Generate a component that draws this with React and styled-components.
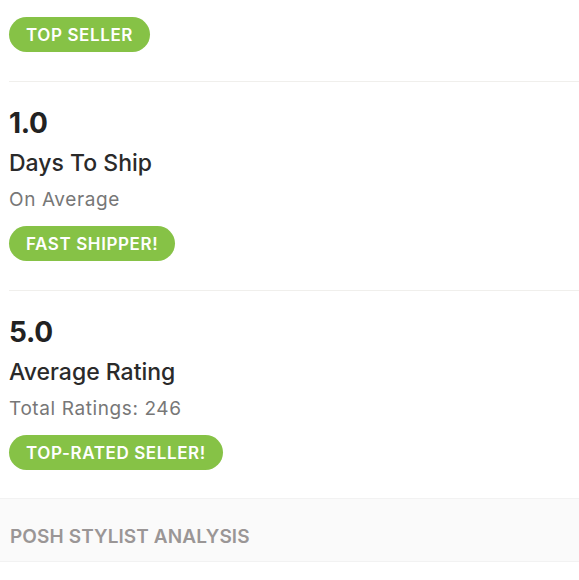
import styled, { createGlobalStyle } from 'styled-components';

const GlobalStyle = createGlobalStyle`
  body {
    margin: 0;
    background: #fff;
    font-family: Inter, Lato, Arial, sans-serif;
    color: #222;
  }
`;

const stats = [
  { value: '1.0', label: 'Days To Ship', sub: 'On Average', badge: 'FAST SHIPPER!' },
  { value: '5.0', label: 'Average Rating', sub: 'Total Ratings: 246', badge: 'TOP-RATED SELLER!' },
];

const App = () => (
  <>
    <GlobalStyle />
    <Page>
      <Section>
        <Badge>TOP SELLER</Badge>
      </Section>
      {stats.map((s, i) => (
        <Section key={s.label} $stat $last={i === stats.length - 1}>
          <Value>{s.value}</Value>
          <Label>{s.label}</Label>
          <Sub>{s.sub}</Sub>
          <Badge>{s.badge}</Badge>
        </Section>
      ))}
      <Header>POSH STYLIST ANALYSIS</Header>
    </Page>
  </>
);

const Page = styled.div`
  display: flex;
  flex-direction: column;
  width: 579px;
`;

const Section = styled.div`
  display: flex;
  flex-direction: column;
  align-items: flex-start;
  margin-left: 9px;
  padding: ${(p) => (p.$stat ? '23px' : '17px')} 0 ${(p) => (p.$last ? '28px' : '29px')};
  border-bottom: ${(p) => (p.$last ? 'none' : '1px solid #f0efec')};
`;

const Value = styled.div`
  font-size: 28px;
  font-weight: 700;
  line-height: 36px;
  color: #222;
  letter-spacing: -0.3px;
`;

const Label = styled.div`
  margin-top: 7px;
  font-size: 23px;
  font-weight: 500;
  line-height: 30px;
  color: #2a2a2a;
`;

const Sub = styled.div`
  margin-top: 10px;
  font-size: 19px;
  line-height: 24px;
  letter-spacing: 0.6px;
  color: #777;
`;

const Badge = styled.span`
  display: inline-flex;
  align-items: center;
  height: 35px;
  padding: 0 17px;
  border-radius: 18px;
  background: #86c246;
  color: #fff;
  font-size: 17px;
  font-weight: 600;
  letter-spacing: 0.6px;
  ${Sub} + & {
    margin-top: 14px;
  }
`;

const Header = styled.div`
  padding: 26px 10px 13px;
  background: #fafafa;
  border-top: 1px solid #f2f2f2;
  border-bottom: 1px solid #f2f2f2;
  font-size: 19px;
  line-height: 23px;
  font-weight: 600;
  letter-spacing: 0.1px;
  color: #9a9696;
`;

export default App;
